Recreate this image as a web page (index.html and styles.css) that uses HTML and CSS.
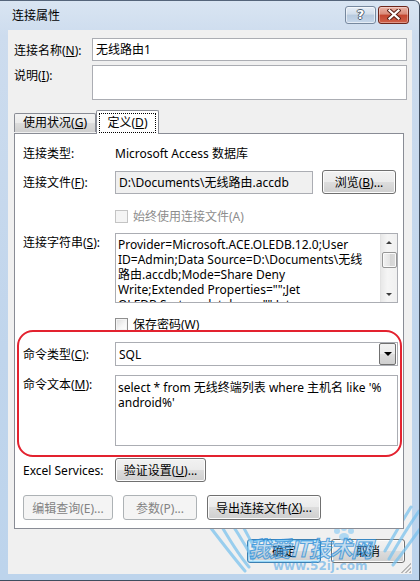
FILE: index.html
```html
<!DOCTYPE html>
<html lang="zh-CN">
<head>
<meta charset="utf-8">
<title>连接属性</title>
<link rel="stylesheet" href="styles.css">
</head>
<body>
<div class="window">
  <div class="titlebar">
    <span class="title">连接属性</span>
    <div class="caption-btns">
      <div class="cbtn help"><span class="qmark">?</span></div>
      <div class="cbtn close">
        <svg width="14" height="11" viewBox="0 0 14 11">
          <path d="M2.5 1.5 L11.5 9.5 M11.5 1.5 L2.5 9.5" stroke="#5a2118" stroke-width="4.2" stroke-linecap="square"/>
          <path d="M2.5 1.5 L11.5 9.5 M11.5 1.5 L2.5 9.5" stroke="#ffffff" stroke-width="2.2" stroke-linecap="square"/>
        </svg>
      </div>
    </div>
  </div>
  <div class="client">
    <div class="form-top">
      <div class="lbl mid">连接名称(<u>N</u>):</div>
      <div class="field">无线路由1</div>
      <div class="lbl top">说明(<u>I</u>):</div>
      <div class="field tall"></div>
    </div>

    <div class="tabs">
      <div class="tab">使用状况(<u>G</u>)</div>
      <div class="tab active"><span class="focus">定义(<u>D</u>)</span></div>
    </div>

    <div class="panel">
      <div class="row r-type">
        <div class="plbl">连接类型:</div>
        <div class="value">Microsoft Access 数据库</div>
      </div>
      <div class="row r-file">
        <div class="plbl">连接文件(<u>F</u>):</div>
        <div class="ctl-line">
          <div class="field ro">D:\Documents\无线路由.accdb</div>
          <div class="btn browse">浏览(<u>B</u>)...</div>
        </div>
      </div>
      <div class="row r-chk1">
        <div></div>
        <div class="check disabled"><span class="box"></span><span>始终使用连接文件(A)</span></div>
      </div>
      <div class="row r-conn">
        <div class="plbl toplbl">连接字符串(<u>S</u>):</div>
        <div class="memo">
          <div class="memo-text">
            <div>Provider=Microsoft.ACE.OLEDB.12.0;User</div>
            <div>ID=Admin;Data Source=D:\Documents\无线</div>
            <div>路由.accdb;Mode=Share Deny</div>
            <div>Write;Extended Properties="";Jet</div>
            <div>OLEDB:System database="";Jet</div>
          </div>
          <div class="vscroll">
            <div class="arrow up"></div>
            <div class="thumb"></div>
            <div class="arrow down"></div>
          </div>
        </div>
      </div>
      <div class="row r-chk2">
        <div></div>
        <div class="check"><span class="box"></span><span>保存密码(<u>W</u>)</span></div>
      </div>

      <div class="highlight">
        <div class="row r-cmdtype">
          <div class="plbl">命令类型(<u>C</u>):</div>
          <div class="combo">
            <span class="combo-text">SQL</span>
            <span class="combo-btn"><span class="tri"></span></span>
          </div>
        </div>
        <div class="row r-cmdtext">
          <div class="plbl toplbl">命令文本(<u>M</u>):</div>
          <div class="memo cmd">
            <div class="memo-text">
              <div>select * from 无线终端列表 where 主机名 like '%</div>
              <div>android%'</div>
            </div>
          </div>
        </div>
      </div>

      <div class="row r-excel">
        <div class="plbl">Excel Services:</div>
        <div class="ctl-line"><div class="btn verify">验证设置(<u>U</u>)...</div></div>
      </div>
      <div class="btn-row">
        <div class="btn disabled edit">编辑查询(E)...</div>
        <div class="btn disabled params">参数(P)...</div>
        <div class="btn export">导出连接文件(<u>X</u>)...</div>
      </div>
    </div>

    <div class="footer">
      <div class="btn default ok">确定</div>
      <div class="btn cancel">取消</div>
    </div>
    <div class="grip"></div>
  </div>

  <div class="watermark">
    <svg class="wings" width="220" height="80" viewBox="0 0 220 80">
      <g fill="none" stroke="#7cc3ee" stroke-width="3" stroke-linecap="round" opacity="0.75">
        <path d="M6 8 C20 30 30 50 44 66"/>
        <path d="M14 4 C28 24 38 40 48 58"/>
        <path d="M2 22 C16 40 28 56 40 70"/>
        <path d="M24 2 C34 18 42 32 50 48"/>
        <path d="M214 10 C200 30 192 44 184 58"/>
        <path d="M206 6 C196 22 188 36 180 50"/>
        <path d="M218 24 C206 40 198 52 188 64"/>
      </g>
      <g fill="#9fd3f3" opacity="0.8">
        <circle cx="132" cy="30" r="3"/>
        <circle cx="139" cy="27" r="3"/>
        <circle cx="146" cy="30" r="3"/>
        <ellipse cx="139" cy="36" rx="5" ry="4"/>
      </g>
    </svg>
    <div class="wm-title">我爱IT技术网</div>
    <div class="wm-url">www.52ij.com</div>
  </div>
</div>
</body>
</html>
```

FILE: styles.css
```css
* { box-sizing: border-box; }

html, body {
  margin: 0;
  padding: 0;
  background: #ffffff;
}

body {
  font-family: "Noto Sans", "Noto Sans CJK SC", sans-serif;
  font-size: 12px;
  color: #000;
}

u { text-decoration: underline; text-underline-offset: 1px; }

.window {
  position: relative;
  width: 420px;
  height: 581px;
  display: flex;
  flex-direction: column;
  background: linear-gradient(180deg, #d9e5f2 0%, #cddcee 6%, #c0d5ec 60%, #bdd4ec 100%);
  border-top: 1px solid #55657a;
  border-right: 1px solid #3f4d5f;
  border-bottom: 1px solid #3f4d5f;
  border-top-right-radius: 6px;
  padding: 0 7px 6px 8px;
  overflow: hidden;
}

.titlebar {
  height: 29px;
  display: flex;
  align-items: center;
  justify-content: space-between;
  flex-shrink: 0;
}

.title {
  margin-left: 4px;
  margin-top: -1px;
  font-size: 12px;
  color: #000;
}

.caption-btns {
  display: flex;
  gap: 2px;
  margin-top: -2px;
  margin-right: 3px;
}

.cbtn {
  width: 31px;
  height: 18px;
  border-radius: 3px;
  display: flex;
  align-items: center;
  justify-content: center;
}

.help {
  border: 1px solid #76889e;
  background: linear-gradient(180deg, #e6eef7 0%, #d2deeb 45%, #b7cade 50%, #c6d7ea 100%);
  box-shadow: inset 0 0 0 1px rgba(255,255,255,0.55);
}

.qmark {
  font-family: "DejaVu Sans", sans-serif;
  font-weight: bold;
  font-size: 13px;
  color: #ffffff;
  line-height: 1;
  text-shadow: 1px 0 0 #4f5e70, -1px 0 0 #4f5e70, 0 1px 0 #4f5e70, 0 -1px 0 #4f5e70;
}

.close {
  border: 1px solid #6d261b;
  background: linear-gradient(180deg, #eab3a6 0%, #d98a78 45%, #c3452f 50%, #d0614a 100%);
  box-shadow: inset 0 0 0 1px rgba(255,255,255,0.35);
}

.client {
  flex: 1;
  position: relative;
  background: #f0f0f0;
  padding: 8px 5px 0 6px;
  display: flex;
  flex-direction: column;
}

/* top form */
.form-top {
  display: grid;
  grid-template-columns: 78px 1fr;
  row-gap: 4px;
}

.lbl { white-space: nowrap; }
.lbl.mid { align-self: center; }
.lbl.top { padding-top: 1px; }

.field {
  height: 23px;
  border: 1px solid #abadb3;
  background: #ffffff;
  padding: 0 3px;
  line-height: 21px;
  white-space: nowrap;
  overflow: hidden;
}
.field.tall { height: 35px; }
.field.ro { background: #f0f0f0; flex: 1; }

/* tabs */
.tabs {
  display: flex;
  align-items: flex-end;
  margin-top: 10px;
  height: 23px;
  position: relative;
  z-index: 2;
}

.tab {
  height: 19px;
  border: 1px solid #898c95;
  border-bottom: none;
  border-radius: 2px 2px 0 0;
  background: linear-gradient(180deg, #f3f3f3 0%, #ebebeb 50%, #dddddd 50%, #cfcfcf 100%);
  padding: 0 5px 0 5px;
  line-height: 17px;
  width: 82px;
  text-align: center;
  margin-bottom: 1px;
}

.tab.active {
  height: 24px;
  width: 63px;
  margin-left: 0;
  margin-bottom: -1px;
  background: #ffffff;
  padding: 3px 3px 0 3px;
  line-height: 17px;
}

.focus {
  display: block;
  outline: 1px dotted #000;
  outline-offset: 0;
  height: 18px;
  line-height: 17px;
}

/* panel */
.panel {
  position: relative;
  z-index: 1;
  background: #ffffff;
  border: 1px solid #898c95;
  margin-right: 3px;
  height: 396px;
  padding: 10px 5px 8px 8px;
  display: flex;
  flex-direction: column;
}

.row {
  display: grid;
  grid-template-columns: 92px 1fr;
  align-items: center;
}

.plbl { white-space: nowrap; }
.toplbl { align-self: start; padding-top: 0; }

.r-type { height: 16px; }
.r-file { margin-top: 10px; height: 23px; }
.r-chk1 { margin-top: 14px; height: 16px; }
.r-conn { margin-top: 10px; height: 70px; }
.r-chk2 { margin-top: 12px; height: 16px; }
.r-cmdtype { margin-top: 0; height: 24px; }
.r-cmdtext { margin-top: 9px; height: 71px; }
.r-excel { margin-top: 12px; height: 23px; }

.ctl-line {
  display: flex;
  align-items: center;
  gap: 9px;
  height: 100%;
}

.value { white-space: nowrap; }

/* buttons */
.btn {
  height: 24px;
  border: 1px solid #707070;
  border-radius: 3px;
  background: linear-gradient(180deg, #f2f2f2 0%, #ebebeb 50%, #dddddd 50%, #cfcfcf 100%);
  box-shadow: inset 0 0 0 1px #fcfcfc;
  display: flex;
  align-items: center;
  justify-content: center;
  white-space: nowrap;
  flex-shrink: 0;
}

.btn.disabled {
  border-color: #adb2b5;
  background: #f4f4f4;
  box-shadow: none;
  color: #838383;
}

.btn.default {
  border-color: #3c7fb1;
  box-shadow: inset 0 0 0 1px #98d6f6, inset 0 0 0 2px #cdebfa;
}

.browse { width: 74px; margin-right: 2px; }
.verify { width: 91px; height: 24px; }

.btn-row {
  display: flex;
  gap: 9px;
  margin-top: 14px;
}
.btn-row .btn { height: 25px; }
.edit { width: 90px; }
.params { width: 74px; margin-left: 1px; }
.export { width: 114px; margin-left: 1px; }

/* checkboxes */
.check {
  display: flex;
  align-items: center;
  gap: 5px;
  white-space: nowrap;
}
.check .box {
  width: 13px;
  height: 13px;
  border: 1px solid #8f8f8f;
  background: linear-gradient(135deg, #dcdcdc 0%, #f6f6f6 60%, #ffffff 100%);
  box-shadow: inset 0 0 0 1px #f4f4f4;
}
.check.disabled { color: #8d8d8d; }
.check.disabled .box {
  border-color: #c4c4c4;
  background: #f4f4f4;
}

/* memo (multiline text) */
.memo {
  height: 100%;
  border: 1px solid #abadb3;
  background: #ffffff;
  display: flex;
  overflow: hidden;
}
.memo-text {
  flex: 1;
  padding: 3px 3px 0 2px;
  line-height: 15px;
  white-space: nowrap;
  overflow: hidden;
}

.vscroll {
  width: 17px;
  background: linear-gradient(90deg, #e8e8e8 0%, #f5f5f5 40%, #f0f0f0 100%);
  border-left: 1px solid #e2e2e2;
  display: flex;
  flex-direction: column;
  align-items: center;
  position: relative;
  padding: 1px;
}
.arrow {
  width: 0;
  height: 0;
  border-left: 3px solid transparent;
  border-right: 3px solid transparent;
}
.arrow.up { border-bottom: 3px solid #3c3c3c; margin-top: 6px; }
.arrow.down { border-top: 3px solid #3c3c3c; margin-top: auto; margin-bottom: 5px; }
.thumb {
  width: 15px;
  height: 16px;
  margin-top: 8px;
  border: 1px solid #969696;
  border-radius: 2px;
  background: linear-gradient(90deg, #f2f2f2 0%, #e4e4e4 50%, #d4d4d4 51%, #dcdcdc 100%);
  box-shadow: inset 0 0 0 1px #fafafa;
}

/* combobox */
.combo {
  height: 24px;
  border: 1px solid #abadb3;
  background: #ffffff;
  display: flex;
  align-items: center;
  padding: 1px;
}
.combo-text { flex: 1; padding-left: 2px; }
.combo-btn {
  width: 17px;
  height: 22px;
  border: 1px solid #707070;
  border-radius: 2px;
  background: linear-gradient(180deg, #f2f2f2 0%, #ebebeb 50%, #dddddd 50%, #cfcfcf 100%);
  display: flex;
  align-items: center;
  justify-content: center;
}
.tri {
  width: 0;
  height: 0;
  border-left: 4px solid transparent;
  border-right: 4px solid transparent;
  border-top: 4px solid #000;
}

.memo.cmd .memo-text { padding-top: 4px; }

/* red annotation */
.highlight {
  position: relative;
  margin-top: 11px;
}
.highlight::before {
  content: "";
  position: absolute;
  left: -6px;
  right: -4px;
  top: -12px;
  bottom: -11px;
  border: 2px solid #e3222f;
  border-radius: 16px;
  pointer-events: none;
}

/* footer */
.footer {
  display: flex;
  justify-content: flex-end;
  gap: 10px;
  margin-top: 10px;
  margin-right: 2px;
}
.footer .btn { width: 74px; height: 24px; }

.grip {
  position: absolute;
  right: 1px;
  bottom: 1px;
  width: 10px;
  height: 10px;
  background:
    linear-gradient(135deg, transparent 0 45%, #a9a9a9 45% 55%, transparent 55% 65%, #a9a9a9 65% 75%, transparent 75% 85%, #a9a9a9 85% 95%, transparent 95%);
  opacity: 0.8;
}

/* watermark */
.watermark {
  position: absolute;
  left: 205px;
  top: 500px;
  width: 215px;
  height: 81px;
  pointer-events: none;
}
.wings {
  position: absolute;
  left: 0;
  top: 0;
}
.wm-title {
  position: absolute;
  left: 43px;
  top: 34px;
  font-family: "Noto Sans CJK SC", sans-serif;
  font-weight: bold;
  font-style: italic;
  font-size: 22px;
  line-height: 24px;
  letter-spacing: -1px;
  color: rgba(120, 190, 240, 0.35);
  -webkit-text-stroke: 1px rgba(40, 140, 215, 0.75);
}
.wm-url {
  position: absolute;
  left: 68px;
  top: 58px;
  font-family: "DejaVu Sans", sans-serif;
  font-weight: bold;
  font-size: 12px;
  line-height: 14px;
  color: rgba(90, 170, 230, 0.6);
}
```
